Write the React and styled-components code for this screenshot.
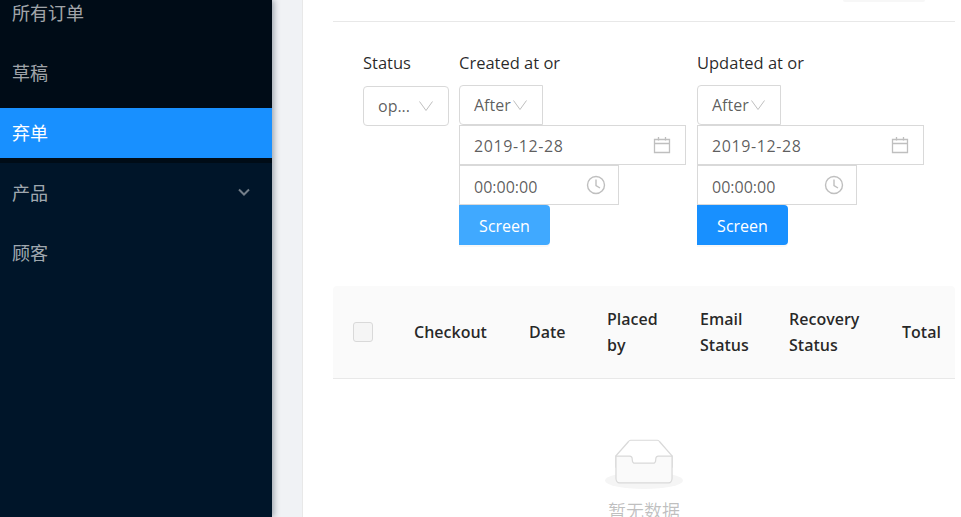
import React from 'react';
import styled, { createGlobalStyle } from 'styled-components';

const latin = '"Open Sans", "Noto Sans", sans-serif';
const cjk = '"Noto Sans CJK SC", sans-serif';

const GlobalStyle = createGlobalStyle`
    html, body {
        margin: 0;
        padding: 0;
        background: #f0f2f5;
    }
    * {
        box-sizing: border-box;
    }
`;

const Page = styled.div`
    display: flex;
    width: 961px;
    height: 517px;
    overflow: hidden;
    background: #f0f2f5;
    font-family: ${latin};
`;

const Sider = styled.aside`
    flex: 0 0 272px;
    background: #001529;
    box-shadow: 2px 0 6px rgba(0, 21, 41, 0.35);
    position: relative;
    z-index: 1;
    font-family: ${cjk};
`;

const SubMenu = styled.div`
    background: #000c17;
    margin-top: -12px;
    height: 175px;
`;

const MenuItem = styled.div`
    display: flex;
    align-items: center;
    justify-content: space-between;
    height: 50px;
    margin-bottom: 10px;
    padding: 0 22px 2px 12px;
    font-size: 18px;
    color: ${p => (p.$active ? '#fff' : 'rgba(255, 255, 255, 0.65)')};
    background: ${p => (p.$active ? '#1890ff' : 'transparent')};
`;

const MainMenu = styled.div`
    padding-top: 5px;
`;

const Content = styled.main`
    flex: 1;
    margin-left: 30px;
    background: #fff;
    border-left: 1px solid #e8e8e8;
    padding: 0 6px 0 30px;
    min-width: 0;
`;

const TopBar = styled.div`
    display: flex;
    justify-content: flex-end;
    height: 22px;
    padding-right: 30px;
    border-bottom: 1px solid #e8e8e8;
`;

const TopButton = styled.div`
    width: 82px;
    height: 2px;
    background: #f7f7f7;
    border-radius: 0 0 4px 4px;
`;

const Filters = styled.div`
    display: flex;
    padding: 30px 0 0 30px;
    height: 264px;
`;

const StatusGroup = styled.div`
    width: 96px;
`;

const RangeGroup = styled.div`
    width: 238px;
`;

const Label = styled.div`
    height: 23px;
    margin-bottom: ${p => (p.$tight ? '10px' : '11px')};
    font-size: 16.5px;
    line-height: 22px;
    color: rgba(0, 0, 0, 0.85);
    white-space: nowrap;
`;

const Field = styled.div`
    display: flex;
    align-items: center;
    justify-content: space-between;
    width: ${p => p.$width}px;
    height: 40px;
    border: 1px solid #d9d9d9;
    border-radius: ${p => p.$radius || '0'};
    font-size: 16px;
    color: rgba(0, 0, 0, 0.65);
    padding: ${p => p.$padding || '0 14px'};
    background: #fff;
    white-space: nowrap;
`;

const FieldText = styled.span`
    padding-top: ${p => p.$drop || 0}px;
    letter-spacing: ${p => p.$spacing || 'normal'};
`;

const Screen = styled.div`
    display: flex;
    align-items: center;
    justify-content: center;
    width: 91px;
    height: 40px;
    padding-top: 1px;
    border-radius: 0 4px 4px 0;
    font-size: 16px;
    color: #fff;
    background: ${p => (p.$hover ? '#40a9ff' : '#1890ff')};
    box-shadow: 0 2px 0 rgba(0, 0, 0, 0.03);
`;

const HeadRow = styled.div`
    display: grid;
    grid-template-columns: 81px 115px 78px 93px 89px 113px 1fr;
    align-items: center;
    height: 93px;
    background: #fafafa;
    border-bottom: 1px solid #e8e8e8;
    border-radius: 4px 4px 0 0;
`;

const CheckCell = styled.div`
    padding-left: 20px;
`;

const CheckBox = styled.div`
    width: 20px;
    height: 20px;
    border: 1px solid #d9d9d9;
    border-radius: 3px;
    background: #f5f5f5;
`;

const HeadCell = styled.div`
    font-size: 16px;
    font-weight: 600;
    line-height: 26px;
    color: rgba(0, 0, 0, 0.85);
    white-space: pre-line;
`;

const Empty = styled.div`
    display: flex;
    flex-direction: column;
    align-items: center;
    padding-top: 60px;
`;

const EmptyText = styled.div`
    margin-top: 8px;
    font-family: ${cjk};
    font-size: 18px;
    line-height: 26px;
    color: rgba(0, 0, 0, 0.25);
`;

const Chevron = ({ size = 16 }) => (
    <svg width={size} height={size} viewBox="0 0 16 16" fill="none" stroke="#bfbfbf" strokeWidth="1">
        <path d="M1.5 3.5L8 12.5L14.5 3.5" />
    </svg>
);

const MenuArrow = () => (
    <svg width="12" height="8" viewBox="0 0 12 8" fill="none" stroke="rgba(255,255,255,0.45)" strokeWidth="2">
        <path d="M1 1.5L6 6.5L11 1.5" />
    </svg>
);

const CalendarIcon = () => (
    <svg width="18" height="18" viewBox="0 0 18 18" fill="none" stroke="#bfbfbf" strokeWidth="1.3">
        <path d="M1.5 3.5H16.5V16.5H1.5Z" />
        <path d="M1.5 7.5H16.5M5.5 1V4.5M12.5 1V4.5" />
    </svg>
);

const ClockIcon = () => (
    <svg width="20" height="20" viewBox="0 0 20 20" fill="none" stroke="#bfbfbf" strokeWidth="1.4">
        <circle cx="10" cy="10" r="8.5" />
        <path d="M10 4.5V10.5L14 13" />
    </svg>
);

const EmptyIcon = () => (
    <svg width="78" height="50" viewBox="0 0 64 41">
        <g transform="translate(0 1)" fill="none" fillRule="evenodd">
            <ellipse fill="#f5f5f5" cx="32" cy="33" rx="32" ry="7" />
            <g fillRule="nonzero" stroke="#d9d9d9">
                <path d="M55 12.76L44.854 1.258C44.367.474 43.656 0 42.907 0H21.093c-.749 0-1.46.474-1.947 1.257L9 12.761V22h46v-9.24z" />
                <path
                    d="M41.613 15.931c0-1.605.994-2.93 2.227-2.931H55v18.137C55 33.26 53.68 35 52.05 35h-40.1C10.32 35 9 33.259 9 31.137V13h11.16c1.233 0 2.227 1.323 2.227 2.928v.022c0 1.605 1.005 2.901 2.237 2.901h14.752c1.232 0 2.237-1.308 2.237-2.913v-.007z"
                    fill="#fafafa"
                />
            </g>
        </g>
    </svg>
);

const DateRange = ({ label, hover, radius }) => (
    <RangeGroup>
        <Label $tight>{label}</Label>
        <Field $width={84} $radius={radius} $padding="0 14px">
            After
            <Chevron />
        </Field>
        <Field $width={227}>
            <FieldText $drop={2} $spacing="0.6px">2019-12-28</FieldText>
            <CalendarIcon />
        </Field>
        <Field $width={160} $padding="0 12px 0 14px">
            <FieldText $drop={4}>00:00:00</FieldText>
            <ClockIcon />
        </Field>
        <Screen $hover={hover}>Screen</Screen>
    </RangeGroup>
);

const columns = ['Checkout', 'Date', 'Placed\nby', 'Email\nStatus', 'Recovery\nStatus', 'Total'];

const App = () => (
    <Page>
        <GlobalStyle />
        <Sider>
            <SubMenu>
                <MenuItem>所有订单</MenuItem>
                <MenuItem>草稿</MenuItem>
                <MenuItem $active>弃单</MenuItem>
            </SubMenu>
            <MainMenu>
                <MenuItem>
                    产品
                    <MenuArrow />
                </MenuItem>
                <MenuItem>顾客</MenuItem>
            </MainMenu>
        </Sider>
        <Content>
            <TopBar>
                <TopButton />
            </TopBar>
            <Filters>
                <StatusGroup>
                    <Label>Status</Label>
                    <Field $width={86} $radius="4px">
                        op...
                        <Chevron />
                    </Field>
                </StatusGroup>
                <DateRange label="Created at or" radius="4px 0 0 4px" hover />
                <DateRange label="Updated at or" radius="4px 0 0 4px" />
            </Filters>
            <HeadRow>
                <CheckCell>
                    <CheckBox />
                </CheckCell>
                {columns.map(name => (
                    <HeadCell key={name}>{name}</HeadCell>
                ))}
            </HeadRow>
            <Empty>
                <EmptyIcon />
                <EmptyText>暂无数据</EmptyText>
            </Empty>
        </Content>
    </Page>
);

export default App;
